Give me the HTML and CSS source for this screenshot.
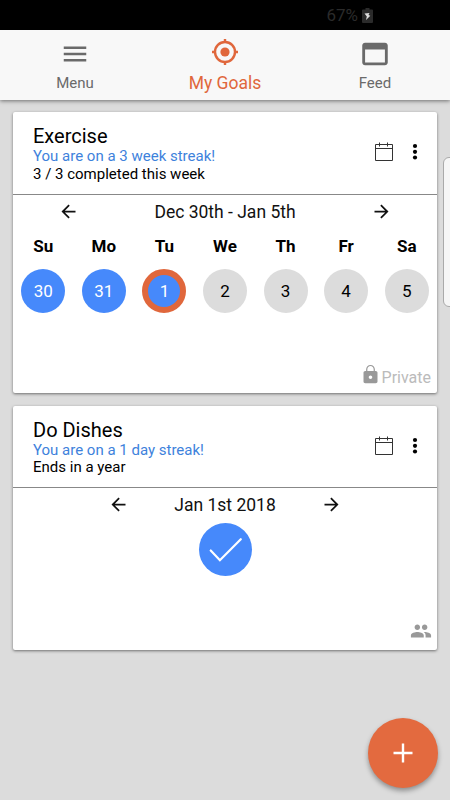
FILE: index.html
```html
<!DOCTYPE html>
<html lang="en">
<head>
    <meta charset="UTF-8">
    <meta name="viewport" content="width=device-width, initial-scale=1.0">
    <title>My Goals</title>
    <link rel="stylesheet" href="styles.css">
</head>
<body>
    <div class="status-bar">
        <span class="battery-level">67%</span>
        <svg class="battery" viewBox="0 0 11 15">
            <path d="M3.5 0h4v1.5H10a1 1 0 0 1 1 1V14a1 1 0 0 1-1 1H1a1 1 0 0 1-1-1V2.500a1 1 0 0 1 1-1h2.500z" fill="#2b2b2b"/>
            <path d="M2.500 5.500l5-.5-1 2 1.800.7L4 12l.8-3.500z" fill="#ddd"/>
        </svg>
    </div>
    <nav class="tabs">
        <a class="tab">
            <svg class="icon-menu" viewBox="0 0 24 24"><path d="M3 18h18v-2H3v2zm0-5h18v-2H3v2zm0-7v2h18V6H3z"/></svg>
            <span>Menu</span>
        </a>
        <a class="tab active">
            <svg class="icon-goal" viewBox="0 0 28 28">
                <circle cx="14" cy="14" r="4.600"/>
                <circle cx="14" cy="14" r="10" fill="none" stroke="currentColor" stroke-width="2.400"/>
                <path d="M14 1v4M14 23v4M1 14h4M23 14h4" stroke="currentColor" stroke-width="2.400"/>
            </svg>
            <span>My Goals</span>
        </a>
        <a class="tab">
            <svg class="icon-feed" viewBox="0 0 24 24"><path d="M19 4H5c-1.110 0-2 .9-2 2v12c0 1.100.89 2 2 2h14c1.100 0 2-.9 2-2V6c0-1.100-.89-2-2-2zm0 14H5V8.800h14V18z"/></svg>
            <span>Feed</span>
        </a>
    </nav>

    <main class="goals">
        <section class="card weekly">
            <header class="card-header">
                <div class="card-info">
                    <h2>Exercise</h2>
                    <p class="streak">You are on a 3 week streak!</p>
                    <p class="detail">3 / 3 completed this week</p>
                </div>
                <svg class="calendar" viewBox="0 0 20 20"><path d="M1.500 2.500h17v16h-17zM1.500 6.500h17M5.500 .5v4M13.500 .5v4"/></svg>
                <svg class="more" viewBox="0 0 6 18"><circle cx="3" cy="3" r="2.100"/><circle cx="3" cy="8.800" r="2.100"/><circle cx="3" cy="14.500" r="2.100"/></svg>
            </header>
            <div class="date-nav">
                <svg class="arrow" viewBox="0 0 24 24"><path d="M20 11H7.830l5.590-5.590L12 4l-8 8 8 8 1.410-1.410L7.830 13H20v-2z"/></svg>
                <span>Dec 30th - Jan 5th</span>
                <svg class="arrow" viewBox="0 0 24 24"><path d="M12 4l-1.410 1.410L16.170 11H4v2h12.170l-5.580 5.590L12 20l8-8z"/></svg>
            </div>
            <div class="week">
                <div class="day"><b>Su</b><span class="dot done">30</span></div>
                <div class="day"><b>Mo</b><span class="dot done">31</span></div>
                <div class="day"><b>Tu</b><span class="dot done today">1</span></div>
                <div class="day"><b>We</b><span class="dot">2</span></div>
                <div class="day"><b>Th</b><span class="dot">3</span></div>
                <div class="day"><b>Fr</b><span class="dot">4</span></div>
                <div class="day"><b>Sa</b><span class="dot">5</span></div>
            </div>
            <footer class="card-footer">
                <svg class="lock" viewBox="0 0 24 24"><path d="M18 8h-1V6c0-2.760-2.240-5-5-5S7 3.240 7 6v2H6c-1.100 0-2 .9-2 2v10c0 1.100.9 2 2 2h12c1.100 0 2-.9 2-2V10c0-1.100-.9-2-2-2zm-6 9c-1.100 0-2-.9-2-2s.9-2 2-2 2 .9 2 2-.9 2-2 2zm3.600-9H8.400V6c0-1.980 1.620-3.600 3.600-3.600s3.600 1.620 3.600 3.600v2z"/></svg>
                <span>Private</span>
            </footer>
        </section>

        <section class="card daily">
            <header class="card-header">
                <div class="card-info">
                    <h2>Do Dishes</h2>
                    <p class="streak">You are on a 1 day streak!</p>
                    <p class="detail">Ends in a year</p>
                </div>
                <svg class="calendar" viewBox="0 0 20 20"><path d="M1.500 2.500h17v16h-17zM1.500 6.500h17M5.500 .5v4M13.500 .5v4"/></svg>
                <svg class="more" viewBox="0 0 6 18"><circle cx="3" cy="3" r="2.100"/><circle cx="3" cy="8.800" r="2.100"/><circle cx="3" cy="14.500" r="2.100"/></svg>
            </header>
            <div class="date-nav">
                <svg class="arrow" viewBox="0 0 24 24"><path d="M20 11H7.830l5.590-5.590L12 4l-8 8 8 8 1.410-1.410L7.830 13H20v-2z"/></svg>
                <span>Jan 1st 2018</span>
                <svg class="arrow" viewBox="0 0 24 24"><path d="M12 4l-1.410 1.410L16.170 11H4v2h12.170l-5.580 5.590L12 20l8-8z"/></svg>
            </div>
            <div class="check">
                <svg viewBox="0 0 52 52"><path d="M11.500 27l9 9.500L41 16"/></svg>
            </div>
            <footer class="card-footer">
                <svg class="people" viewBox="0 0 24 24"><path d="M16 11c1.660 0 2.990-1.340 2.990-3S17.660 5 16 5c-1.660 0-3 1.340-3 3s1.340 3 3 3zm-8 0c1.660 0 2.990-1.340 2.990-3S9.660 5 8 5C6.340 5 5 6.340 5 8s1.340 3 3 3zm0 2c-2.330 0-7 1.170-7 3.500V19h14v-2.500c0-2.330-4.670-3.500-7-3.500zm8 0c-.29 0-.62.02-.97.05 1.160.84 1.970 1.970 1.970 3.450V19h6v-2.500c0-2.330-4.670-3.500-7-3.500z"/></svg>
            </footer>
        </section>
    </main>

    <div class="edge-handle"></div>
    <button class="fab" aria-label="Add goal">
        <svg viewBox="0 0 20 20"><path d="M10 .5v19M.5 10h19"/></svg>
    </button>
</body>
</html>
```
FILE: styles.css
```css
* {
    box-sizing: border-box;
}
body {
    margin: 0;
    height: 800px;
    position: relative;
    overflow: hidden;
    background-color: #dcdcdc;
    color: #000;
    font-family: Roboto, sans-serif;
}
svg {
    display: block;
    flex: none;
    fill: currentColor;
}
h2, p {
    margin: 0;
    font-weight: normal;
}
.status-bar {
    height: 30px;
    background-color: #000;
    display: flex;
    align-items: center;
    justify-content: flex-end;
    padding-right: 77px;
    gap: 4px;
}
.battery-level {
    font-size: 17px;
    color: #2b2b2b;
}
.battery {
    width: 11px;
    height: 15px;
}
.tabs {
    height: 70px;
    background-color: #f8f8f8;
    box-shadow: 0 1px 4px rgba(0, 0, 0, 0.5);
    display: grid;
    grid-template-columns: repeat(3, 1fr);
}
.tab {
    display: flex;
    flex-direction: column;
    align-items: center;
    justify-content: space-between;
    padding: 7px 0 8px;
    font-size: 15px;
    line-height: 18px;
    color: #6a6a6a;
}
.tab.active {
    color: #e0673c;
    font-size: 17.5px;
}
.icon-menu {
    width: 30px;
    height: 30px;
    margin-top: 2px;
}
.icon-goal {
    width: 28px;
    height: 28px;
    margin-top: 1px;
}
.icon-feed {
    width: 34px;
    height: 34px;
}
.goals {
    padding: 12px 13px;
    display: grid;
    gap: 13px;
}
.card {
    background-color: #fff;
    border-radius: 2px;
    box-shadow: 0 1px 3px rgba(0, 0, 0, 0.5);
    display: flex;
    flex-direction: column;
}
.weekly {
    height: 281px;
}
.daily {
    height: 244px;
}
.card-header {
    height: 82px;
    flex: none;
    border-bottom: 1px solid #888;
    display: flex;
    align-items: center;
    padding: 0 19px 2px 20px;
}
.weekly .card-header {
    height: 83px;
}
.card-info {
    flex: 1;
    padding-top: 4px;
}
.card-info h2 {
    font-size: 20px;
    line-height: 23px;
}
.card-info p {
    font-size: 15px;
    line-height: 17.5px;
}
.card-info .streak {
    color: #3e82dc;
}
.calendar {
    width: 20px;
    height: 20px;
    fill: none;
    stroke: #333;
    margin-right: 18px;
}
.more {
    width: 6px;
    height: 18px;
}
.date-nav {
    height: 33px;
    display: flex;
    align-items: center;
    justify-content: space-between;
    padding: 0 45px;
    font-size: 17.5px;
    color: #111;
}
.daily .date-nav {
    padding: 0 95px;
}
.arrow {
    width: 21px;
    height: 21px;
}
.week {
    display: grid;
    grid-template-columns: repeat(7, 1fr);
    padding-top: 8px;
}
.day {
    display: flex;
    flex-direction: column;
    align-items: center;
    gap: 13px;
    font-size: 17px;
    line-height: 20px;
}
.dot {
    width: 44px;
    height: 44px;
    border-radius: 50%;
    background-color: #dcdcdc;
    display: flex;
    align-items: center;
    justify-content: center;
}
.dot.done {
    background-color: #4689fb;
    color: #fff;
}
.dot.today {
    border: 6.5px solid #e0673c;
}
.check {
    width: 53px;
    height: 53px;
    margin: 2px auto 0;
    border-radius: 50%;
    background-color: #4689fb;
}
.check svg {
    fill: none;
    stroke: #fff;
    stroke-width: 2.2;
    stroke-linecap: round;
}
.card-footer {
    margin-top: auto;
    display: flex;
    align-items: center;
    justify-content: flex-end;
    color: #bbb;
    font-size: 16px;
    line-height: 19px;
    padding: 0 6px 6px 0;
}
.lock {
    width: 21px;
    height: 21px;
    color: #999;
    margin: -6px 1px 0 0;
}
.people {
    width: 22px;
    height: 22px;
    color: #999;
    margin: 0 -1px 2px 0;
}
/* system edge panel handle, runs off the right side */
.edge-handle {
    position: absolute;
    right: -8px;
    top: 157px;
    width: 15px;
    height: 150px;
    background-color: #f6f6f6;
    border: 1px solid #aaa;
    border-radius: 6px;
}
.fab {
    position: absolute;
    right: 12.5px;
    bottom: 12.5px;
    width: 70px;
    height: 70px;
    border: none;
    border-radius: 50%;
    background-color: #e36a3f;
    box-shadow: 0 3px 5px rgba(0, 0, 0, 0.35);
    display: flex;
    align-items: center;
    justify-content: center;
}
.fab svg {
    width: 20px;
    height: 20px;
    stroke: #fff;
    stroke-width: 2.4;
}
```
